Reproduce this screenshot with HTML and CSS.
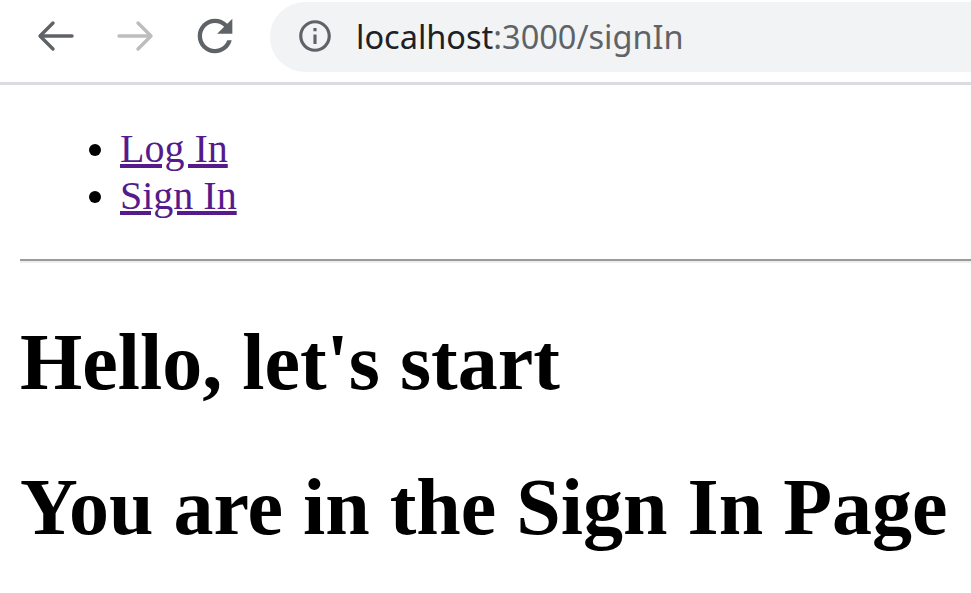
FILE: index.html
```html
<!DOCTYPE html>
<html>
<head>
<meta charset="utf-8">
<title>Sign In</title>
<link rel="stylesheet" href="styles.css">
</head>
<body>
<header class="toolbar">
  <div class="nav-buttons">
    <svg class="nav-icon back" width="40" height="40" viewBox="0 0 40 40">
      <polyline points="17,5 4,18 17,31" fill="none" stroke="#5f6368" stroke-width="3.4" stroke-linecap="round" stroke-linejoin="round"/>
      <line x1="5" y1="18" x2="36" y2="18" stroke="#5f6368" stroke-width="3.4" stroke-linecap="round"/>
    </svg>
    <svg class="nav-icon forward" width="40" height="40" viewBox="0 0 40 40">
      <polyline points="21,5 34,18 21,31" fill="none" stroke="#bcbdbe" stroke-width="3.4" stroke-linecap="round" stroke-linejoin="round"/>
      <line x1="2" y1="18" x2="33" y2="18" stroke="#bcbdbe" stroke-width="3.4" stroke-linecap="round"/>
    </svg>
    <svg class="nav-icon reload" width="52" height="52" viewBox="0 0 24 24">
      <path fill="#5f6368" d="M17.65 6.35C16.2 4.9 14.21 4 12 4c-4.42 0-7.990 3.58-7.99 8s3.57 8 7.99 8c3.73 0 6.84-2.55 7.73-6h-2.08c-.82 2.33-3.04 4-5.65 4-3.31 0-6-2.690-6-6s2.69-6 6-6c1.66 0 3.14.69 4.22 1.78L13 11h7V4l-2.35 2.35z"/>
    </svg>
  </div>
  <div class="omnibox">
    <svg class="info-icon" width="38" height="38" viewBox="0 0 24 24">
      <path fill="#5f6368" d="M11 7h2v2h-2zm0 4h2v6h-2zm1-9C6.48 2 2 6.48 2 12s4.48 10 10 10 10-4.48 10-10S17.52 2 12 2zm0 18c-4.41 0-8-3.59-8-8s3.59-8 8-8 8 3.590 8 8-3.59 8-8 8z"/>
    </svg>
    <span class="url"><span class="host">localhost</span><span class="path">:3000/signIn</span></span>
  </div>
</header>
<main class="page">
  <ul class="links">
    <li><a href="#">Log In</a></li>
    <li><a href="#">Sign In</a></li>
  </ul>
  <hr class="divider">
  <h1 class="heading">Hello, let's start</h1>
  <h1 class="heading">You are in the Sign In Page</h1>
</main>
</body>
</html>
```

FILE: styles.css
```css
html, body {
  margin: 0;
  padding: 0;
  background: #ffffff;
  overflow: hidden;
}

.toolbar {
  height: 82px;
  border-bottom: 3px solid #dadce0;
  display: flex;
  align-items: flex-start;
  background: #ffffff;
  box-sizing: content-box;
  overflow: hidden;
}

.nav-buttons {
  display: flex;
  align-items: center;
  height: 74px;
  width: 270px;
  flex: none;
}

.nav-icon {
  display: block;
  flex: none;
}

.back {
  margin-left: 36px;
  margin-top: 2px;
}

.forward {
  margin-left: 41px;
  margin-top: 2px;
}

.reload {
  margin-left: 32px;
  margin-top: -2px;
}

.omnibox {
  margin-top: 2px;
  height: 70px;
  flex: none;
  width: 760px;
  background: #f1f3f4;
  border-radius: 35px;
  display: flex;
  align-items: center;
  padding-left: 26px;
}

.info-icon {
  display: block;
  flex: none;
  margin-top: -2px;
}

.url {
  margin-left: 22px;
  font-family: "Noto Sans", "Open Sans", sans-serif;
  font-size: 32.5px;
  margin-top: -2px;
  white-space: nowrap;
}

.host {
  color: #202124;
}

.path {
  color: #5f6368;
}

.page {
  display: flow-root;
  padding: 0 20px;
  font-family: "Liberation Serif", "Times New Roman", serif;
  color: #000000;
}

.links {
  font-size: 40px;
  margin: 40px 0;
  padding-left: 100px;
  list-style: disc;
}

.links a {
  color: #551a8b;
  text-decoration: underline;
}

.divider {
  height: 0;
  border: none;
  border-top: 2px solid #9a9a9a;
  border-bottom: 2px solid #eeeeee;
  margin: 2px -20px 0 0;
}

.heading {
  font-size: 80px;
  font-weight: bold;
  margin: 54px 0;
  white-space: nowrap;
}
```
